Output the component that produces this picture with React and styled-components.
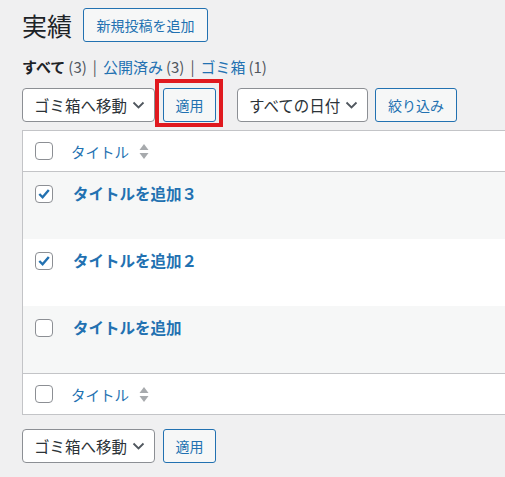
import React from 'react'
import styled, { createGlobalStyle } from 'styled-components'

const GlobalStyle = createGlobalStyle`
  html, body {
    margin: 0;
    padding: 0;
    overflow: hidden;
    background: #f0f0f1;
    font-family: "Noto Sans CJK JP", "Noto Sans", sans-serif;
    color: #1d2327;
  }
`

const Wrap = styled.div`
  padding: 8px 0 0 22px;
  overflow: hidden;
`

const HeadRow = styled.div`
  display: flex;
  align-items: center;
  gap: 11px;
  height: 34px;
`

const PageTitle = styled.h1`
  margin: 0;
  font-size: 25px;
  font-weight: 400;
  line-height: 30px;
  color: #1d2327;
`

const OutlineButton = styled.button`
  position: relative;
  box-sizing: border-box;
  height: 34px;
  padding: 0 ${p => p.$px || 12}px;
  border: 1px solid #2271b1;
  border-radius: 3px;
  background: #f6f7f7;
  color: #2271b1;
  font-family: inherit;
  font-size: 14px;
  line-height: 1;
  cursor: pointer;
`

const Highlight = styled.span`
  position: absolute;
  top: -10px;
  left: -9px;
  right: -8px;
  bottom: -6px;
  border: 4px solid #e0191f;
  pointer-events: none;
`

const Filters = styled.ul`
  display: flex;
  align-items: center;
  list-style: none;
  margin: 15px 0 0;
  padding: 0;
  font-size: 15px;
  line-height: 20px;
  color: #50575e;
`

const FilterItem = styled.li`
  color: ${p => (p.$current ? '#1d2327' : '#2271b1')};
  font-weight: ${p => (p.$current ? 700 : 400)};
`

const Count = styled.span`
  color: #50575e;
  font-weight: 400;
  margin-left: 3px;
`

const Sep = styled.span`
  margin: 0 6px;
  color: #50575e;
`

const TableNav = styled.div`
  display: flex;
  align-items: center;
  margin-top: ${p => p.$mt}px;
`

const SelectBox = styled.div`
  box-sizing: border-box;
  display: flex;
  align-items: center;
  justify-content: space-between;
  width: ${p => p.$w}px;
  height: 34px;
  padding: 0 9px 0 11px;
  margin-right: ${p => p.$mr || 8}px;
  background: #fff;
  border: 1px solid #8c8f94;
  border-radius: 4px;
  font-size: 15.5px;
  color: #2c3338;
`

const Gap = styled.div`
  width: ${p => p.$w}px;
`

const Table = styled.div`
  margin-top: 8px;
  border: 1px solid #c3c4c7;
  border-right: none;
  background: #fff;
`

const HeadCell = styled.div`
  display: flex;
  align-items: center;
  height: 40px;
  padding-left: 12px;
  ${p => (p.$foot ? 'border-top: 1px solid #c3c4c7;' : 'border-bottom: 1px solid #c3c4c7;')}
  font-size: 14.5px;
  color: #2271b1;
`

const Row = styled.div`
  display: flex;
  align-items: flex-start;
  box-sizing: border-box;
  height: 67px;
  padding: 13px 0 0 12px;
  background: ${p => (p.$alt ? '#f6f7f7' : '#fff')};
`

const Check = styled.span`
  box-sizing: border-box;
  display: inline-flex;
  align-items: center;
  justify-content: center;
  width: 18px;
  height: 18px;
  border: 1px solid #8c8f94;
  border-radius: 4px;
  background: #fff;
  flex-shrink: 0;
`

const ColLabel = styled.span`
  margin-left: 18px;
  display: flex;
  align-items: center;
  gap: 10px;
`

const RowTitle = styled.a`
  margin-left: 20px;
  margin-top: -2px;
  font-size: 15.5px;
  font-weight: 700;
  line-height: 21px;
  color: #2271b1;
  text-decoration: none;
`

const Chevron = () => (
  <svg width="13" height="8" viewBox="0 0 13 8">
    <path d="M1.5 1.5 L6.5 6.5 L11.5 1.5" fill="none" stroke="#50575e" strokeWidth="1.8" />
  </svg>
)

const SortArrows = () => (
  <svg width="10" height="17" viewBox="0 0 10 17">
    <path d="M5 1 L9.5 7 H0.5 Z" fill="#a7aaad" />
    <path d="M5 16 L9.5 10 H0.5 Z" fill="#a7aaad" />
  </svg>
)

const CheckBox = ({ checked }) => (
  <Check>
    {checked && (
      <svg width="14" height="14" viewBox="0 0 14 14">
        <path d="M2.3 7 L5.6 10.3 L11.8 3" fill="none" stroke="#2271b1" strokeWidth="2.4" />
      </svg>
    )}
  </Check>
)

const posts = [
  { title: 'タイトルを追加３', checked: true },
  { title: 'タイトルを追加２', checked: true },
  { title: 'タイトルを追加', checked: false },
]

const ColumnHead = ({ foot }) => (
  <HeadCell $foot={foot}>
    <CheckBox />
    <ColLabel>
      タイトル
      <SortArrows />
    </ColLabel>
  </HeadCell>
)

export default function App() {
  return (
    <>
      <GlobalStyle />
      <Wrap>
        <HeadRow>
          <PageTitle>実績</PageTitle>
          <OutlineButton $px={12.5}>新規投稿を追加</OutlineButton>
        </HeadRow>

        <Filters>
          <FilterItem $current>すべて<Count>(3)</Count></FilterItem>
          <Sep>|</Sep>
          <FilterItem>公開済み<Count>(3)</Count></FilterItem>
          <Sep>|</Sep>
          <FilterItem>ゴミ箱<Count>(1)</Count></FilterItem>
        </Filters>

        <TableNav $mt={11}>
          <SelectBox $w={133}>ゴミ箱へ移動<Chevron /></SelectBox>
          <OutlineButton $px={11.5}>
            適用
            <Highlight />
          </OutlineButton>
          <Gap $w={21} />
          <SelectBox $w={131} $mr={7}>すべての日付<Chevron /></SelectBox>
          <OutlineButton>絞り込み</OutlineButton>
        </TableNav>

        <Table>
          <ColumnHead />
          {posts.map((p, i) => (
            <Row key={p.title} $alt={i % 2 === 0}>
              <CheckBox checked={p.checked} />
              <RowTitle href="#">{p.title}</RowTitle>
            </Row>
          ))}
          <ColumnHead foot />
        </Table>

        <TableNav $mt={14}>
          <SelectBox $w={133}>ゴミ箱へ移動<Chevron /></SelectBox>
          <OutlineButton $px={11.5}>適用</OutlineButton>
        </TableNav>
      </Wrap>
    </>
  )
}
